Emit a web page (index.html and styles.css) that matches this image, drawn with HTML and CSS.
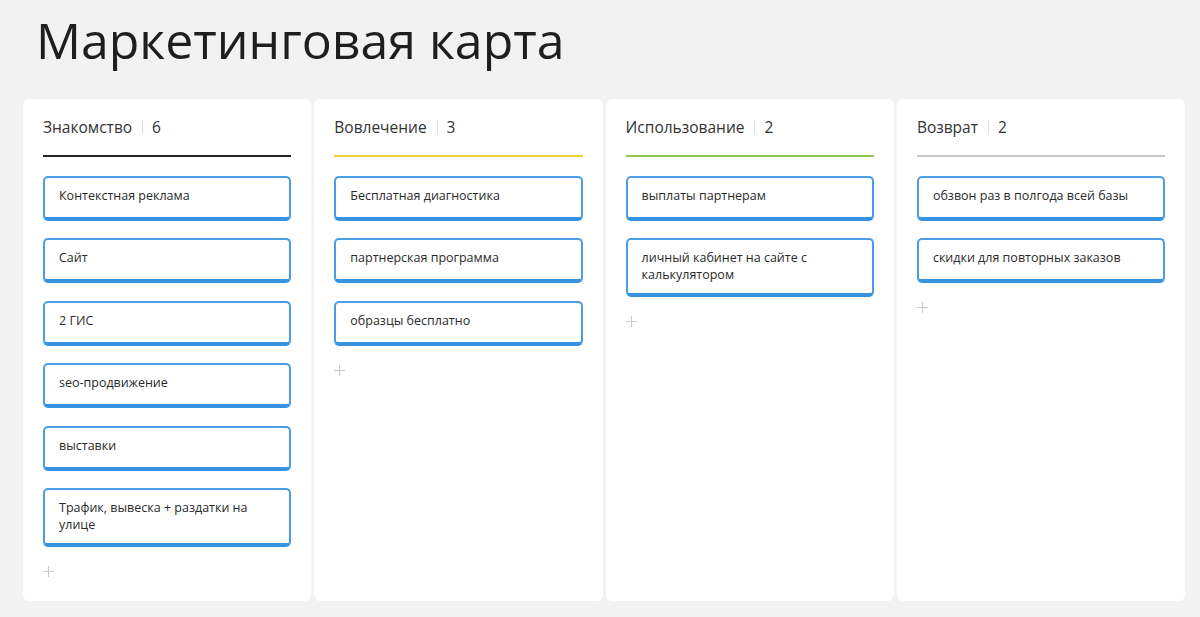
FILE: index.html
```html
<!DOCTYPE html>
<html lang="ru">
<head>
<meta charset="utf-8">
<title>Маркетинговая карта</title>
<link rel="stylesheet" href="styles.css">
</head>
<body>
<h1 class="title">Маркетинговая карта</h1>
<div class="board">
  <section class="column">
    <header class="col-head line-black"><span class="col-name">Знакомство</span><span class="sep"></span><span class="col-count">6</span></header>
    <div class="cards">
      <div class="card">Контекстная реклама</div>
      <div class="card">Сайт</div>
      <div class="card">2 ГИС</div>
      <div class="card">seo-продвижение</div>
      <div class="card">выставки</div>
      <div class="card">Трафик, вывеска + раздатки на улице</div>
    </div>
    <div class="add"><svg width="11" height="11" viewBox="0 0 11 11"><path d="M5.5 0v11M0 5.5h11" stroke="#c9c9c9" stroke-width="1"/></svg></div>
  </section>
  <section class="column">
    <header class="col-head line-yellow"><span class="col-name">Вовлечение</span><span class="sep"></span><span class="col-count">3</span></header>
    <div class="cards">
      <div class="card">Бесплатная диагностика</div>
      <div class="card">партнерская программа</div>
      <div class="card">образцы бесплатно</div>
    </div>
    <div class="add"><svg width="11" height="11" viewBox="0 0 11 11"><path d="M5.5 0v11M0 5.5h11" stroke="#c9c9c9" stroke-width="1"/></svg></div>
  </section>
  <section class="column">
    <header class="col-head line-green"><span class="col-name">Использование</span><span class="sep"></span><span class="col-count">2</span></header>
    <div class="cards">
      <div class="card">выплаты партнерам</div>
      <div class="card">личный кабинет на сайте с калькулятором</div>
    </div>
    <div class="add"><svg width="11" height="11" viewBox="0 0 11 11"><path d="M5.5 0v11M0 5.5h11" stroke="#c9c9c9" stroke-width="1"/></svg></div>
  </section>
  <section class="column">
    <header class="col-head line-gray"><span class="col-name">Возврат</span><span class="sep"></span><span class="col-count">2</span></header>
    <div class="cards">
      <div class="card">обзвон раз в полгода всей базы</div>
      <div class="card">скидки для повторных заказов</div>
    </div>
    <div class="add"><svg width="11" height="11" viewBox="0 0 11 11"><path d="M5.5 0v11M0 5.5h11" stroke="#c9c9c9" stroke-width="1"/></svg></div>
  </section>
</div>
</body>
</html>
```
FILE: styles.css
```css
* { box-sizing: border-box; }
html, body {
  margin: 0;
  padding: 0;
  background: #f2f2f2;
  font-family: "Open Sans", "Noto Sans", "Liberation Sans", sans-serif;
  color: #2b2b2b;
}
.title {
  margin: 0 0 23px 0;
  padding: 5px 0 0 36px;
  font-size: 50px;
  font-weight: 400;
  line-height: 71px;
  color: #1e1e1e;
}
.board {
  display: flex;
  gap: 3px;
  padding-left: 23px;
  height: 502px;
}
.column {
  width: 288.3px;
  flex: none;
  background: #ffffff;
  border-radius: 6px;
  padding: 20px 20px 0 20px;
}
.col-head {
  display: flex;
  align-items: center;
  height: 38px;
  padding-bottom: 20px;
  border-bottom: 2px solid #222;
  font-size: 15.5px;
  line-height: 16px;
  color: #333;
}
.line-black { border-bottom-color: #252525; }
.line-yellow { border-bottom-color: #f2cf3b; }
.line-green { border-bottom-color: #8dc650; }
.line-gray { border-bottom-color: #cacaca; }
.sep {
  display: inline-block;
  width: 1px;
  height: 14px;
  background: #dedede;
  margin: 0 9px 0 10px;
}
.cards {
  display: flex;
  flex-direction: column;
  gap: 17.4px;
  margin-top: 19px;
}
.card {
  border: 2px solid #4a9fe4;
  border-bottom: 4px solid #3593e0;
  border-radius: 5px;
  padding: 9px 16px 10px 14px;
  min-height: 45px;
  font-size: 12.5px;
  line-height: 17px;
  color: #2a2a2a;
}
.add {
  margin-top: 19px;
  height: 11px;
  display: flex;
}
.add svg { display: block; }
```
